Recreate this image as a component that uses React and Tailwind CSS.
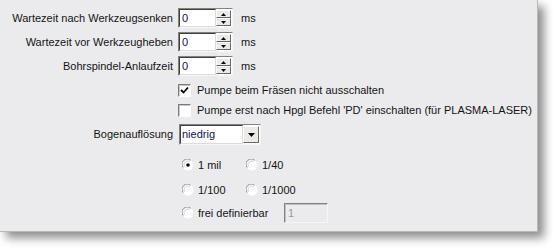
import React from 'react';

const Tri = ({ dir = 'down' }) => (
  <svg width="5" height="3" viewBox="0 0 5 3" className="block">
    {dir === 'up' ? <path d="M2.5 0 L5 3 L0 3 Z" fill="#000" /> : <path d="M0 0 L5 0 L2.5 3 Z" fill="#000" />}
  </svg>
);

const SpinBox = ({ value }) => (
  <div className="flex h-[20px] w-[55px] border border-t-[#828282] border-l-[#828282] border-r-[#f6f6f6] border-b-[#f6f6f6] bg-white">
    <div className="flex flex-1 items-center border border-t-[#404040] border-l-[#404040] border-r-[#dcdcdc] border-b-[#dcdcdc] pl-[2px] text-[#101060]">
      {value}
    </div>
    <div className="flex w-[16px] flex-col py-[1px] pr-[1px]">
      <div className="flex flex-1 items-center justify-center border border-t-white border-l-white border-r-[#6a6a6a] border-b-[#6a6a6a] bg-[#ece9e8]">
        <Tri dir="up" />
      </div>
      <div className="flex flex-1 items-center justify-center border border-t-white border-l-white border-r-[#6a6a6a] border-b-[#6a6a6a] bg-[#ece9e8]">
        <Tri />
      </div>
    </div>
  </div>
);

const NumRow = ({ label }) => (
  <div className="flex h-[20px] items-center">
    <div className="w-[174px] pr-[1px] text-right whitespace-nowrap">{label}</div>
    <div className="ml-[4px]">
      <SpinBox value="0" />
    </div>
    <div className="ml-[8px]">ms</div>
  </div>
);

const Check = ({ checked, label }) => (
  <div className="flex h-[20px] items-center pl-[178px]">
    <div className="flex h-[13px] w-[13px] shrink-0 items-center justify-center border border-t-[#7a7a7a] border-l-[#7a7a7a] border-r-white border-b-white bg-white shadow-[inset_1px_1px_0_#c8c8c8]">
      {checked && (
        <svg width="9" height="9" viewBox="0 0 9 9">
          <path d="M1 4 L3.5 6.5 L8 1.5" stroke="#000" strokeWidth="1.8" fill="none" />
        </svg>
      )}
    </div>
    <span className="ml-[6px] whitespace-nowrap">{label}</span>
  </div>
);

const Radio = ({ checked, label }) => (
  <div className="flex items-center whitespace-nowrap">
    <svg width="12" height="12" viewBox="0 0 12 12" className="shrink-0">
      <circle cx="6" cy="6" r="5.5" fill="#fff" />
      <path d="M1.2 8.5 A5.2 5.2 0 0 1 8.5 1.2" stroke="#8a8a8a" strokeWidth="1" fill="none" />
      <path d="M2.3 7.6 A4 4 0 0 1 7.6 2.3" stroke="#cfcfcf" strokeWidth="1" fill="none" />
      {checked && <circle cx="6" cy="6" r="1.8" fill="#000" />}
    </svg>
    <span className="ml-[4px]">{label}</span>
  </div>
);

export default function App() {
  return (
    <div className="h-[248px] w-[554px] bg-white font-['Liberation_Sans',Arial,sans-serif] text-[11px] text-[#141414]">
      <div className="h-[232px] w-[538px] border-r border-b border-[#b8b8b8] bg-[#ebebee] pt-[8px] shadow-[6px_6px_9px_rgba(0,0,0,0.45)]">
        <div className="flex flex-col gap-[4px]">
          <NumRow label="Wartezeit nach Werkzeugsenken" />
          <NumRow label="Wartezeit vor Werkzeugheben" />
          <NumRow label="Bohrspindel-Anlaufzeit" />
        </div>
        <div className="mt-[4px]">
          <Check checked label="Pumpe beim Fräsen nicht ausschalten" />
          <Check label="Pumpe erst nach Hpgl Befehl 'PD' einschalten (für PLASMA-LASER)" />
        </div>
        <div className="mt-[4px] flex h-[21px] items-center">
          <div className="w-[174px] pr-[1px] text-right">Bogenauflösung</div>
          <div className="ml-[5px] flex h-[21px] w-[82px] border border-t-[#828282] border-l-[#828282] border-r-[#f6f6f6] border-b-[#f6f6f6] bg-white">
            <div className="flex flex-1 items-center border border-t-[#404040] border-l-[#404040] border-r-[#dcdcdc] border-b-[#dcdcdc] pl-[1px] text-[#101060]">
              niedrig
            </div>
            <div className="my-[1px] mr-[1px] flex w-[16px] items-center justify-center border border-t-white border-l-white border-r-[#6a6a6a] border-b-[#6a6a6a] bg-[#ece9e8]">
              <svg width="7" height="4" viewBox="0 0 7 4">
                <path d="M0 0 L7 0 L3.5 4 Z" fill="#000" />
              </svg>
            </div>
          </div>
        </div>
        <div className="ml-[182px] mt-[10px] grid w-[140px] grid-cols-[64px_1fr] gap-y-[5px]">
          <div className="flex h-[20px] items-center"><Radio checked label="1 mil" /></div>
          <div className="flex h-[20px] items-center"><Radio label="1/40" /></div>
          <div className="flex h-[20px] items-center"><Radio label="1/100" /></div>
          <div className="flex h-[20px] items-center"><Radio label="1/1000" /></div>
        </div>
        <div className="ml-[182px] mt-[3px] flex h-[20px] items-center">
          <div className="w-[102px]">
            <Radio label="frei definierbar" />
          </div>
          <div className="flex h-[20px] w-[44px] items-center border border-t-[#828282] border-l-[#828282] border-r-[#f6f6f6] border-b-[#f6f6f6] pl-[3px] text-[#9a9a9a] shadow-[inset_1px_1px_0_#c0c0c0]">
            1
          </div>
        </div>
      </div>
    </div>
  );
}
